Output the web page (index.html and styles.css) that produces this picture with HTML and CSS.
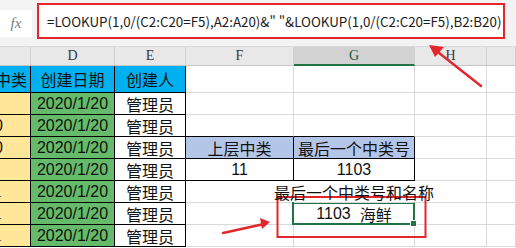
FILE: index.html
```html
<!DOCTYPE html>
<html lang="zh">
<head>
    <meta charset="UTF-8">
    <title>LOOKUP</title>
    <link rel="stylesheet" href="styles.css">
</head>
<body>
    <div class="formula-bar">
        <div class="fx">fx</div>
        <div class="formula">=LOOKUP(1,0/(C2:C20=F5),A2:A20)&amp;" "&amp;LOOKUP(1,0/(C2:C20=F5),B2:B20)</div>
    </div>

    <div class="sheet">
        <!-- column headers -->
        <div class="hd"></div>
        <div class="hd">D</div>
        <div class="hd">E</div>
        <div class="hd">F</div>
        <div class="hd hd-sel">G</div>
        <div class="hd">H</div>
        <div class="hd"></div>

        <!-- row 1 -->
        <div class="c tb blue cut-end"><span>中类</span></div>
        <div class="c tb blue">创建日期</div>
        <div class="c tb blue">创建人</div>
        <div class="c"></div>
        <div class="c"></div>
        <div class="c"></div>
        <div class="c"></div>

        <!-- row 2 -->
        <div class="c tb yellow"></div>
        <div class="c tb green num">2020/1/20</div>
        <div class="c tb">管理员</div>
        <div class="c"></div>
        <div class="c"></div>
        <div class="c"></div>
        <div class="c"></div>

        <!-- row 3 -->
        <div class="c tb yellow cut"><span class="zero">0</span></div>
        <div class="c tb green num">2020/1/20</div>
        <div class="c tb">管理员</div>
        <div class="c bb"></div>
        <div class="c bb"></div>
        <div class="c"></div>
        <div class="c"></div>

        <!-- row 4 -->
        <div class="c tb yellow cut"><span class="zero">0</span></div>
        <div class="c tb green num">2020/1/20</div>
        <div class="c tb">管理员</div>
        <div class="c tb slate">上层中类</div>
        <div class="c tb slate">最后一个中类号</div>
        <div class="c"></div>
        <div class="c"></div>

        <!-- row 5 -->
        <div class="c tb yellow"></div>
        <div class="c tb green num">2020/1/20</div>
        <div class="c tb">管理员</div>
        <div class="c tb num">11</div>
        <div class="c tb num">1103</div>
        <div class="c"></div>
        <div class="c"></div>

        <!-- row 6 -->
        <div class="c tb yellow cut"><span class="one">1</span></div>
        <div class="c tb green num">2020/1/20</div>
        <div class="c tb">管理员</div>
        <div class="c no-r"></div>
        <div class="c no-r spill">最后一个中类号和名称</div>
        <div class="c"></div>
        <div class="c"></div>

        <!-- row 7 -->
        <div class="c tb yellow cut"><span class="one">1</span></div>
        <div class="c tb green num">2020/1/20</div>
        <div class="c tb">管理员</div>
        <div class="c"></div>
        <div class="c num selected"><span class="code">1103</span>海鲜<span class="handle"></span></div>
        <div class="c"></div>
        <div class="c"></div>

        <!-- row 8 -->
        <div class="c tb yellow cut"><span class="one">1</span></div>
        <div class="c tb green num">2020/1/20</div>
        <div class="c tb">管理员</div>
        <div class="c"></div>
        <div class="c"></div>
        <div class="c"></div>
        <div class="c"></div>
    </div>

    <!-- red annotations drawn over the sheet -->
    <svg class="marks" width="516" height="248" viewBox="0 0 516 248">
        <g stroke="#e3262c" stroke-width="2.4" fill="none" stroke-linecap="round">
            <line x1="481" y1="86" x2="434" y2="49" />
            <line x1="223" y1="233" x2="264" y2="224" />
        </g>
        <g fill="#e3262c">
            <polygon points="429,45 444,47 435,57" />
            <polygon points="270,222 260,218 262,229" />
        </g>
        <rect x="277.5" y="197" width="148" height="40" fill="none" stroke="#e3262c" stroke-width="2" />
    </svg>
</body>
</html>
```

FILE: styles.css
```css
body {
    margin: 0;
    width: 516px;
    height: 248px;
    overflow: hidden;
    position: relative;
    background-color: #ffffff;
    font-family: "Liberation Sans", "Noto Sans CJK SC", sans-serif;
    color: #111111;
}

.formula-bar {
    height: 47px;
    display: flex;
    align-items: flex-start;
    background-color: #f3f3f3;
    box-sizing: border-box;
    border-bottom: 1px solid #dadada;
}

.fx {
    width: 32px;
    height: 27px;
    margin-top: 10px;
    background-color: #ffffff;
    display: flex;
    align-items: center;
    justify-content: center;
    font-family: "Liberation Serif", serif;
    font-style: italic;
    font-size: 15px;
    color: #7a7a7a;
}

.formula {
    width: 468px;
    height: 36px;
    margin-top: 3px;
    margin-left: 5px;
    box-sizing: border-box;
    border: 2px solid #e3262c;
    background-color: #ffffff;
    padding-left: 8px;
    display: flex;
    align-items: center;
    font-family: "Noto Sans CJK SC", sans-serif;
    font-size: 13.35px;
    color: #1a1a1a;
    white-space: nowrap;
}

.sheet {
    display: grid;
    grid-template-columns: 31px 84px 71px 108px 121px 72px 29px;
    grid-template-rows: 19px 27px repeat(7, 22px);
}

.hd {
    box-sizing: border-box;
    background-color: #e8e8e8;
    border-right: 1px solid #cfcfcf;
    border-bottom: 1px solid #c6c6c6;
    display: flex;
    align-items: center;
    justify-content: center;
    font-family: "Liberation Serif", serif;
    font-size: 14px;
    color: #3a3a3a;
}

.hd-sel {
    background-color: #d2d2d2;
    border-bottom: 2px solid #217346;
    color: #1f5b3a;
}

.c {
    box-sizing: border-box;
    border-right: 1px solid #d9d9d9;
    border-bottom: 1px solid #d9d9d9;
    display: flex;
    align-items: center;
    justify-content: center;
    font-size: 16px;
    white-space: nowrap;
    position: relative;
}

.tb {
    border-right-color: #000000;
    border-bottom-color: #000000;
}

.bb {
    border-bottom-color: #000000;
}

.no-r {
    border-right-color: transparent;
}

.num {
    font-family: "Liberation Sans", "Noto Sans CJK SC", sans-serif;
}

.code {
    margin-right: 9px;
}

.blue {
    background-color: #00b0f0;
}

.green {
    background-color: #66bb6a;
}

.yellow {
    background-color: #ffe699;
}

.slate {
    background-color: #b4c6e7;
}

.cut,
.cut-end {
    overflow: hidden;
    justify-content: flex-start;
}

.cut-end {
    justify-content: flex-end;
    padding-right: 3px;
}

.zero {
    margin-left: -6px;
}

.one {
    margin-left: -6px;
    font-family: "Liberation Serif", serif;
}

.spill {
    overflow: visible;
    z-index: 1;
}

.selected::after {
    content: "";
    position: absolute;
    top: -1px;
    left: -2px;
    right: -1px;
    bottom: -1px;
    border: 2px solid #217346;
}

.handle {
    position: absolute;
    right: -3px;
    bottom: -3px;
    width: 5px;
    height: 5px;
    background-color: #217346;
    border: 1px solid #ffffff;
    z-index: 2;
}

.marks {
    position: absolute;
    top: 0;
    left: 0;
    pointer-events: none;
}
```
